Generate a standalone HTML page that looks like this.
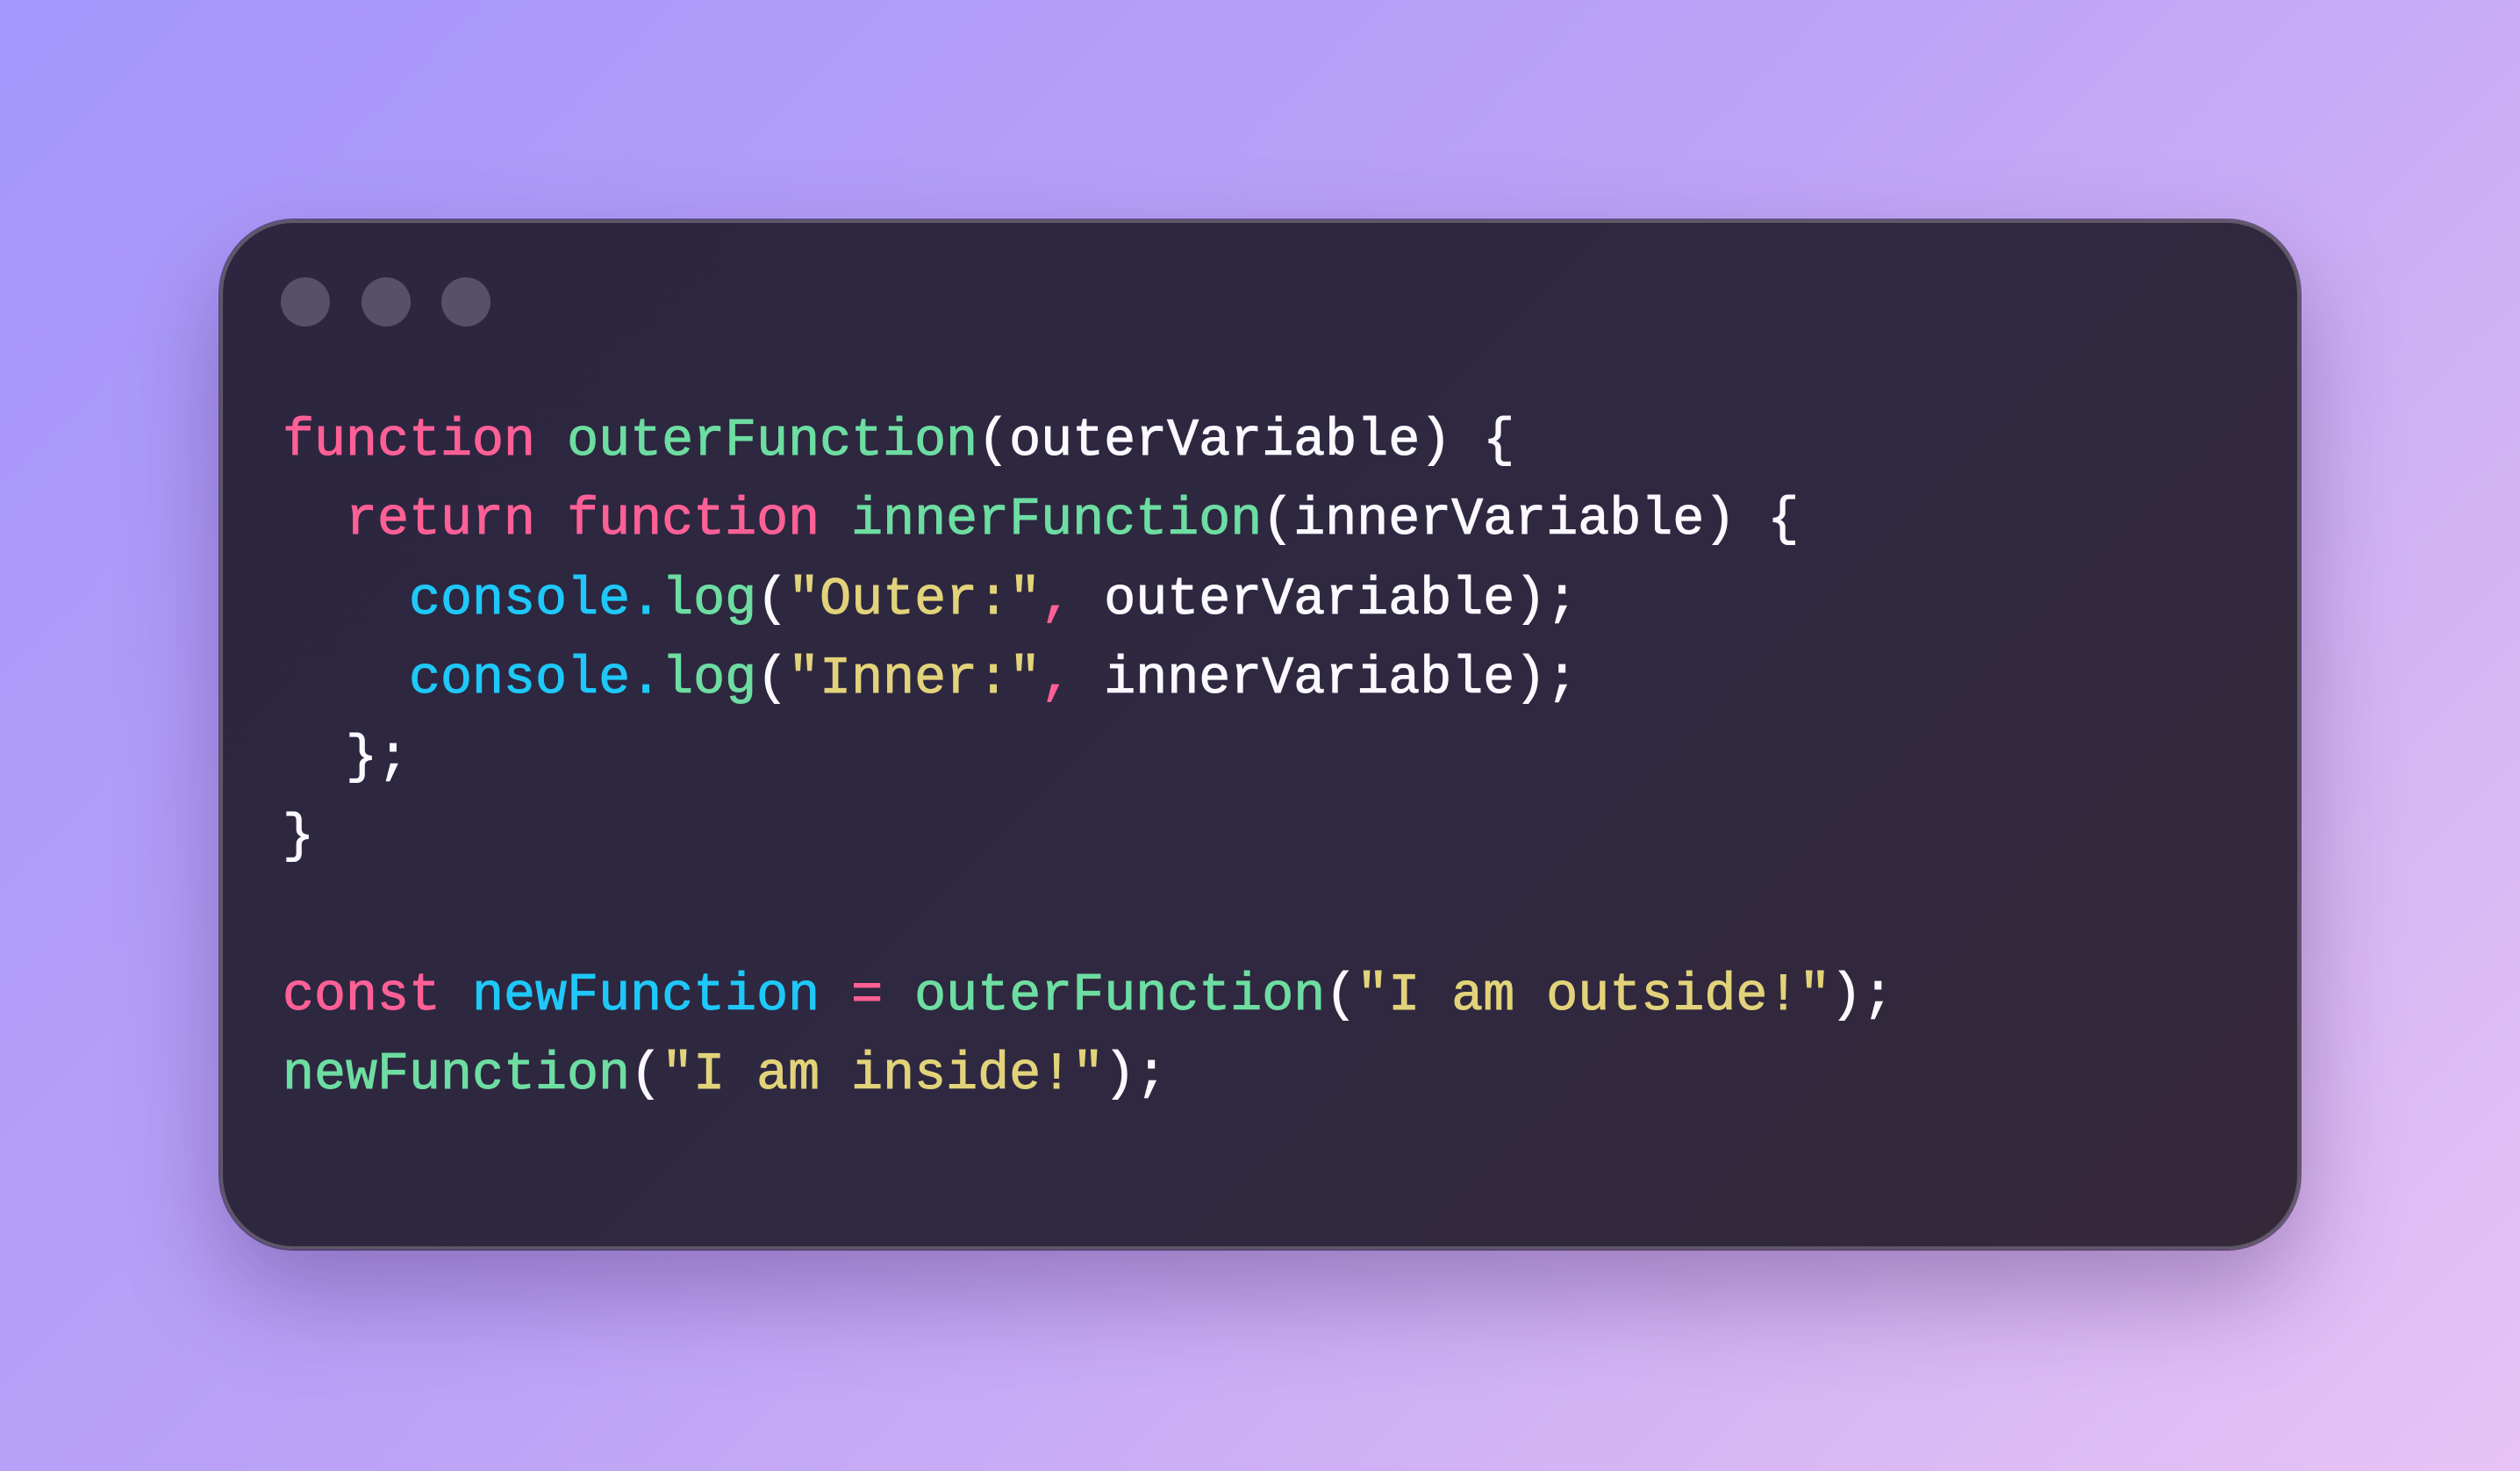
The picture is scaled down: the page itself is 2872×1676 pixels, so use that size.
<!DOCTYPE html>
<html><head><meta charset="utf-8"><style>
html,body{margin:0;padding:0}
body{width:2872px;height:1676px;overflow:hidden;position:relative;background:linear-gradient(135deg,#a496fb 0%,#bba2f7 45%,#d7b6f4 80%,#e8c3f5 100%)}
.card{position:absolute;left:251px;top:251px;width:2364px;height:1166px;border-radius:84px;background:linear-gradient(135deg,#2c2640 0%,#2f2840 60%,#352839 100%);border:3px solid #5e5866;box-shadow:0 50px 110px rgba(60,30,90,0.35),0 0 0 2px rgba(40,30,50,0.6)}
.dot{position:absolute;top:316px;width:56px;height:56px;border-radius:50%;background:#56506a}
pre{position:absolute;left:322px;top:458px;margin:0;font-family:"Liberation Mono",monospace;font-size:60px;line-height:90.3px;color:#fbf9ff;-webkit-text-stroke:1px currentColor}
.k{color:#fe6096}.f{color:#6ddda1}.c{color:#1ec8f9}.s{color:#e2d37a}
</style></head><body>
<div class="card"></div>
<div class="dot" style="left:320px"></div>
<div class="dot" style="left:412px"></div>
<div class="dot" style="left:503px"></div>
<pre><span class="k">function</span> <span class="f">outerFunction</span>(outerVariable) {
  <span class="k">return</span> <span class="k">function</span> <span class="f">innerFunction</span>(innerVariable) {
    <span class="c">console</span><span class="c">.</span><span class="f">log</span>(<span class="s">"Outer:"</span><span class="k">,</span> outerVariable);
    <span class="c">console</span><span class="c">.</span><span class="f">log</span>(<span class="s">"Inner:"</span><span class="k">,</span> innerVariable);
  };
}

<span class="k">const</span> <span class="c">newFunction</span> <span class="k">=</span> <span class="f">outerFunction</span>(<span class="s">"I am outside!"</span>);
<span class="f">newFunction</span>(<span class="s">"I am inside!"</span>);</pre>
</body></html>
